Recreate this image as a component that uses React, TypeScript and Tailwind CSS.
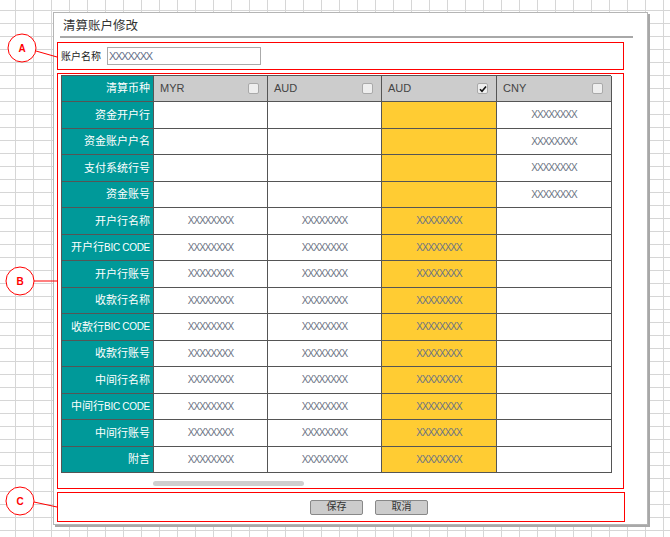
import React from "react";

type Row = {
  label: string;
  code?: string;
  fund: boolean;
};

const rows: Row[] = [
  { label: "资金开户行", fund: true },
  { label: "资金账户户名", fund: true },
  { label: "支付系统行号", fund: true },
  { label: "资金账号", fund: true },
  { label: "开户行名称", fund: false },
  { label: "开户行", code: "BIC CODE", fund: false },
  { label: "开户行账号", fund: false },
  { label: "收款行名称", fund: false },
  { label: "收款行", code: "BIC CODE", fund: false },
  { label: "收款行账号", fund: false },
  { label: "中间行名称", fund: false },
  { label: "中间行", code: "BIC CODE", fund: false },
  { label: "中间行账号", fund: false },
  { label: "附言", fund: false },
];

const currencies = [
  { code: "MYR", checked: false },
  { code: "AUD", checked: false },
  { code: "AUD", checked: true },
  { code: "CNY", checked: false },
];

function Box({ checked }: { checked: boolean }) {
  return (
    <span className="flex h-[11px] w-[11px] items-center justify-center rounded-[2px] border border-[#a9a9a9] bg-[#eeeeee]">
      {checked && (
        <svg width="8" height="8" viewBox="0 0 8 8">
          <path d="M1 4.2 L3 6.3 L7 1.5" stroke="#111" strokeWidth="1.6" fill="none" />
        </svg>
      )}
    </span>
  );
}

function Xs() {
  return <span className="text-[10px] tracking-[-1px] text-[#6b7383]">XXXXXXXX</span>;
}

export default function App() {
  const font = "font-['Liberation_Sans','Noto_Sans_CJK_SC',sans-serif]";
  return (
    <div
      className={`relative h-[537px] w-[670px] overflow-hidden bg-white ${font} bg-[linear-gradient(to_right,#d6d6d6_1px,transparent_1px),linear-gradient(to_bottom,#d6d6d6_1px,transparent_1px)] bg-[size:18px_13px] bg-[position:15px_10px]`}
    >
      <div className="pl-[53px] pt-[12px]">
        <div className="flex h-[513px] w-[595px] flex-col border border-[#b5b5b5] bg-white shadow-[2px_2px_0_#a8a8a8]">
          {/* title */}
          <div className="ml-[6px] flex h-[25px] w-[573px] items-center border-b-2 border-[#a8a8a8] pl-[3px] pt-[4px] text-[12.5px] text-[#333]">
            清算账户修改
          </div>

          {/* A */}
          <div className="ml-[3px] mt-[4px] flex h-[28px] w-[567px] items-center border border-[#ff0000] pl-[3px]">
            <span className="text-[10px] text-[#222]">账户名称</span>
            <div className="ml-[6px] flex h-[18px] w-[154px] items-center border border-[#aaaaaa] pl-[1px]">
              <span className="text-[11px] tracking-[-1.2px] text-[#66708a]">XXXXXXX</span>
            </div>
          </div>

          {/* B */}
          <div className="ml-[3px] mt-[3px] flex h-[416px] w-[567px] flex-col border border-[#ff0000] pl-[3px] pt-[1px]">
            <div className="grid w-[550px] grid-cols-[92px_114px_114px_115px_115px] border-l border-t border-[#555]">
              <div className="flex h-[26px] items-center justify-end border-b border-r border-[#555] bg-[#009999] pr-[3px] text-[11px] text-white">
                清算币种
              </div>
              {currencies.map((c, i) => (
                <div
                  key={i}
                  className="flex h-[26px] items-center justify-between border-b border-r border-[#555] bg-[#cccccc] pl-[6px] pr-[8px] text-[11px] text-[#444]"
                >
                  <span>{c.code}</span>
                  <Box checked={c.checked} />
                </div>
              ))}
              {rows.map((r, i) => (
                <React.Fragment key={i}>
                  <div className="flex h-[26.5px] items-center justify-end whitespace-nowrap border-b border-r border-[#555] bg-[#009999] pr-[3px] text-[11px] text-white">
                    {r.label}
                    {r.code && <span className="text-[10px] tracking-[-0.3px]">{r.code}</span>}
                  </div>
                  <div className="flex h-[26.5px] items-center justify-center border-b border-r border-[#555] bg-white">
                    {!r.fund && <Xs />}
                  </div>
                  <div className="flex h-[26.5px] items-center justify-center border-b border-r border-[#555] bg-white">
                    {!r.fund && <Xs />}
                  </div>
                  <div className="flex h-[26.5px] items-center justify-center border-b border-r border-[#555] bg-[#ffcc33]">
                    {!r.fund && <Xs />}
                  </div>
                  <div className="flex h-[26.5px] items-center justify-center border-b border-r border-[#555] bg-white">
                    {r.fund && <Xs />}
                  </div>
                </React.Fragment>
              ))}
            </div>
            <div className="ml-[92px] mt-[8px] h-[5px] w-[151px] rounded-full bg-[#cfcfcf]" />
          </div>

          {/* C */}
          <div className="ml-[3px] mt-[3px] flex h-[30px] w-[568px] items-center gap-[12px] border border-[#ff0000] pl-[252px]">
            <button className="h-[15px] w-[53px] rounded-[2px] border border-[#888] bg-[#cccccc] text-[10px] leading-none text-[#333]">
              保存
            </button>
            <button className="h-[15px] w-[53px] rounded-[2px] border border-[#888] bg-[#cccccc] text-[10px] leading-none text-[#333]">
              取消
            </button>
          </div>
        </div>
      </div>

      {/* callouts */}
      <svg className="absolute left-0 top-0" width="670" height="537">
        <line x1="36" y1="51" x2="57" y2="57" stroke="#ff0000" strokeWidth="1" />
        <circle cx="22" cy="48" r="14" fill="white" stroke="#ff0000" strokeWidth="1" />
        <text x="22" y="52" textAnchor="middle" fontSize="10" fontWeight="bold" fill="#ff0000" fontFamily="Liberation Sans, sans-serif">
          A
        </text>
        <line x1="34" y1="281" x2="57" y2="281" stroke="#ff0000" strokeWidth="1" />
        <circle cx="20" cy="281" r="14" fill="white" stroke="#ff0000" strokeWidth="1" />
        <text x="20" y="285" textAnchor="middle" fontSize="10" fontWeight="bold" fill="#ff0000" fontFamily="Liberation Sans, sans-serif">
          B
        </text>
        <line x1="34" y1="502" x2="57" y2="507" stroke="#ff0000" strokeWidth="1" />
        <circle cx="20" cy="501" r="14" fill="white" stroke="#ff0000" strokeWidth="1" />
        <text x="20" y="505" textAnchor="middle" fontSize="10" fontWeight="bold" fill="#ff0000" fontFamily="Liberation Sans, sans-serif">
          C
        </text>
      </svg>
    </div>
  );
}
